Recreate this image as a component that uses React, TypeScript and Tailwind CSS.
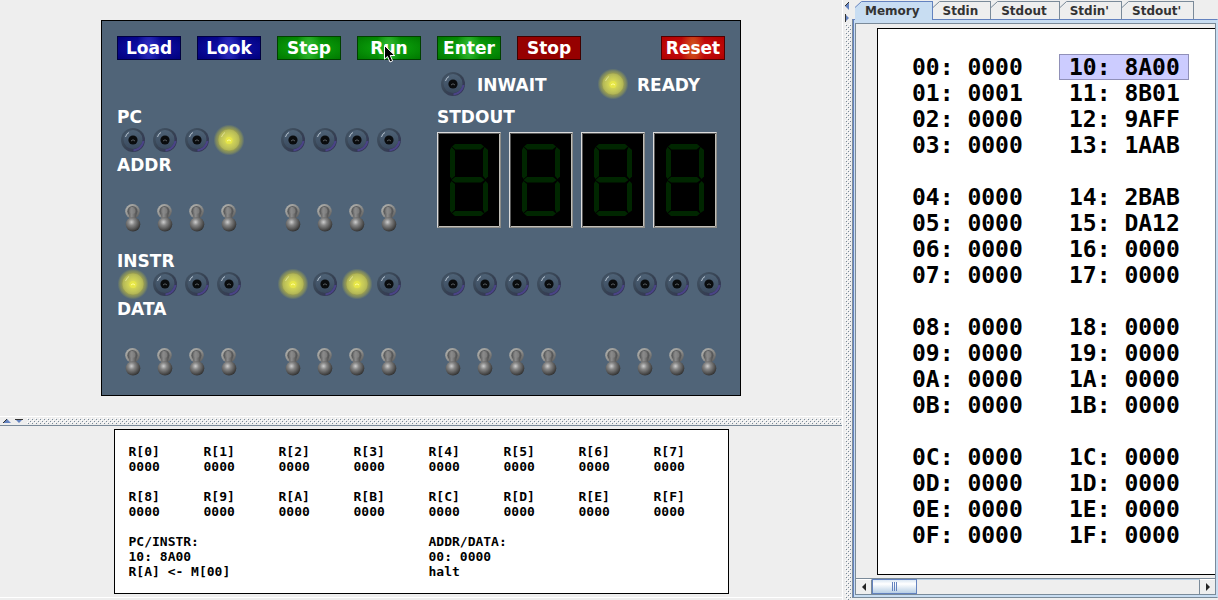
import { useState } from "react";
import clsx from "clsx";

type Word = { addr: string; value: string };

const tabs = ["Memory", "Stdin", "Stdout", "Stdin'", "Stdout'"];

const hex = (n: number, digits: number) =>
  n.toString(16).toUpperCase().padStart(digits, "0");

const stored: Record<number, string> = {
  0x01: "0001",
  0x10: "8A00",
  0x11: "8B01",
  0x12: "9AFF",
  0x13: "1AAB",
  0x14: "2BAB",
  0x15: "DA12",
};

const word = (n: number): Word => ({ addr: hex(n, 2), value: stored[n] ?? "0000" });

const memory = [0, 4, 8, 12].map((start) =>
  [0, 1, 2, 3].map((i) => [word(start + i), word(0x10 + start + i)])
);

const registers = [0, 8].map((start) =>
  Array.from({ length: 8 }, (_, i) => ({ name: `R[${hex(start + i, 1)}]`, value: "0000" }))
);

const buttonColors = {
  blue: "border-[#000040] bg-[radial-gradient(ellipse_12px_30px_at_center,#3030c0,transparent),radial-gradient(ellipse_at_center,#1010a8_20%,#00007c)]",
  green: "border-[#004000] bg-[radial-gradient(ellipse_12px_30px_at_center,#34b834,transparent),radial-gradient(ellipse_at_center,#0ca40c_20%,#007800)]",
  red: "border-[#400000] bg-[#960000]",
  glow: "border-[#500000] bg-[radial-gradient(ellipse_12px_30px_at_center,#d0581e,transparent),radial-gradient(ellipse_at_center,#cc1010_20%,#b00000)]",
};

function PanelButton({ label, color, hovered }: { label: string; color: keyof typeof buttonColors; hovered?: boolean }) {
  return (
    <button
      type="button"
      className={clsx(
        "relative flex h-6 w-16 items-center justify-center border text-[17px] leading-6 font-bold text-white",
        buttonColors[color],
        label === "Reset" && "ml-auto"
      )}
    >
      {label}
      {hovered && (
        <svg className="absolute top-2 left-[26px] h-[18px] w-3" viewBox="0 0 12 18" aria-hidden="true">
          <path d="M.5 .5V14.2L3.5 11.4L6 17L8.6 15.8L6.2 10.5H10.8Z" fill="#000" stroke="#fff" />
        </svg>
      )}
    </button>
  );
}

function Led({ on }: { on?: boolean }) {
  return (
    <span className="flex h-6 w-8 items-center justify-center">
      <svg className="h-8 w-8 shrink-0" viewBox="0 0 32 32" role="img" aria-label={on ? "on" : "off"}>
        {on ? (
          <>
            <circle cx="16" cy="16" r="15.5" fill="url(#led-halo)" />
            <circle cx="16" cy="16" r="11" fill="url(#led-on)" />
            <circle cx="16" cy="16" r="11" fill="none" stroke="#8c9048" strokeOpacity=".45" />
            <path d="M8.5 13Q10 9.5 12 8.5" fill="none" stroke="#e8e8a0" strokeOpacity=".8" />
            <circle cx="16" cy="16.5" r="3.5" fill="#e6e648" />
            <path d="M14 17Q16 14.5 18 17" fill="none" stroke="#ffff9c" />
          </>
        ) : (
          <>
            <circle cx="16" cy="16" r="12" fill="url(#led-rim)" />
            <circle cx="16" cy="15.5" r="9.5" fill="url(#led-off)" />
            <path d="M16.5 26.5Q24.5 25.5 26.5 17" fill="none" stroke="#54489c" strokeWidth="2" strokeOpacity=".7" />
            <path d="M8.5 13Q9.5 9.5 12 8.5" fill="none" stroke="#b4c0cc" />
            <circle cx="16" cy="16" r="4.6" fill="#0a0c0e" />
            <path d="M14 17Q16 14.5 18 17" fill="none" stroke="#585c60" />
          </>
        )}
      </svg>
    </span>
  );
}

function Toggle({ label }: { label: string }) {
  return (
    <label className="relative flex h-7 w-8 justify-center">
      <input type="checkbox" className="sr-only" aria-label={label} />
      <svg className="h-7 w-4" viewBox="0 0 16 28" aria-hidden="true">
        <circle cx="7.5" cy="7.3" r="7.3" fill="url(#ring)" />
        <circle cx="7.5" cy="7.3" r="5.2" fill="#5c5e60" />
        <path d="M3.5 7A4 4 0 0 1 11.5 7L11 15H4.500Z" fill="url(#stem)" />
        <circle cx="7.5" cy="7" r="3" fill="#888" fillOpacity=".6" />
        <circle cx="8" cy="20.300" r="7.300" fill="url(#ball)" />
      </svg>
    </label>
  );
}

// Lays bits out in nibbles, one 32px cell for each bit
function Bits({ bits, name, kind }: { bits: string; name: string; kind: "led" | "toggle" }) {
  const nibbles = bits.match(/.{4}/g) ?? [];
  return (
    <div className="flex gap-8" role="group" aria-label={name}>
      {nibbles.map((nibble, n) => (
        <div key={n} className="flex">
          {nibble.split("").map((bit, i) =>
            kind === "led" ? (
              <Led key={i} on={bit === "1"} />
            ) : (
              <Toggle key={i} label={`${name} bit ${bits.length - 1 - n * 4 - i}`} />
            )
          )}
        </div>
      ))}
    </div>
  );
}

function PanelLabel({ children }: { children: string }) {
  return <div className="h-6 text-[17px] leading-[26px] font-bold text-white">{children}</div>;
}

function Digit() {
  return (
    <svg
      className="h-24 w-16 border border-t-[#dcdcdc] border-r-[#8c8c88] border-b-[#8c8c88] border-l-[#dcdcdc] bg-black"
      viewBox="0 0 62 94"
      aria-hidden="true"
    >
      <path d="M.5 94V.5H62" fill="none" stroke="#585858" />
      <path d="M61.500 1V93.500H1" fill="none" stroke="#c0beb8" />
      <g fill="#002600">
        <path d="M17 11H43L46 13.500L42.500 16.500H17.500L14 13.500Z" />
        <path d="M17 44H43L46.500 47L43 49.500H17L13.500 47Z" />
        <path d="M17 78H43L46 80.500L43 83H17L14 80.500Z" />
        <path d="M13.500 14L17 17.500V43L13.500 46L12 43.500V17Z" />
        <path d="M46.500 14L50 17V43.500L47.500 46L45 43V17.500Z" />
        <path d="M13.500 48L17 51V76.500L13.500 80L12 77.500V50.500Z" />
        <path d="M47.500 48L50 50.500V77.500L46.500 80L45 76.500V51Z" />
      </g>
    </svg>
  );
}

function FrontPanel() {
  return (
    <section
      aria-label="Front panel"
      className="w-[640px] border border-black bg-[#506478] px-[15px] pt-[15px] pb-[19px] font-['DejaVu_Sans',sans-serif]"
    >
      <div className="flex gap-4">
        <PanelButton label="Load" color="blue" />
        <PanelButton label="Look" color="blue" />
        <PanelButton label="Step" color="green" />
        <PanelButton label="Run" color="green" hovered />
        <PanelButton label="Enter" color="green" />
        <PanelButton label="Stop" color="red" />
        <PanelButton label="Reset" color="glow" />
      </div>

      <div className="mt-3 ml-80 grid grid-cols-[160px_1fr]">
        <div className="flex gap-2">
          <Led />
          <PanelLabel>INWAIT</PanelLabel>
        </div>
        <div className="flex gap-2">
          <Led on />
          <PanelLabel>READY</PanelLabel>
        </div>
      </div>

      <div className="mt-2 grid grid-cols-[320px_1fr]">
        <div>
          <PanelLabel>PC</PanelLabel>
          <Bits kind="led" name="PC" bits="00010000" />
          <PanelLabel>ADDR</PanelLabel>
          <div className="mt-7">
            <Bits kind="toggle" name="ADDR" bits="00000000" />
          </div>
        </div>
        <div>
          <PanelLabel>STDOUT</PanelLabel>
          <div className="mt-1 flex gap-2">
            <Digit />
            <Digit />
            <Digit />
            <Digit />
          </div>
        </div>
      </div>

      <div className="mt-4">
        <PanelLabel>INSTR</PanelLabel>
        <Bits kind="led" name="INSTR" bits="1000101000000000" />
        <PanelLabel>DATA</PanelLabel>
        <div className="mt-7">
          <Bits kind="toggle" name="DATA" bits="0000000000000000" />
        </div>
      </div>
    </section>
  );
}

function Registers() {
  return (
    <section
      aria-label="Registers"
      className="w-[615px] border border-black bg-white py-[14px] pl-[14px] font-['DejaVu_Sans_Mono',monospace] text-[13px] leading-[15px] font-bold text-black"
    >
      <div className="grid gap-[15px]">
        {registers.map((row) => (
          <dl key={row[0].name} className="grid grid-cols-[repeat(8,75px)]">
            {row.map((reg) => (
              <div key={reg.name}>
                <dt>{reg.name}</dt>
                <dd>{reg.value}</dd>
              </div>
            ))}
          </dl>
        ))}
        <div className="grid grid-cols-[300px_1fr]">
          <div>
            <p>PC/INSTR:</p>
            <p>10: 8A00</p>
            <p>R[A] &lt;- M[00]</p>
          </div>
          <div>
            <p>ADDR/DATA:</p>
            <p>00: 0000</p>
            <p>halt</p>
          </div>
        </div>
      </div>
    </section>
  );
}

function MemoryTable() {
  return (
    <div className="w-max border border-black bg-white pt-[25px] pr-96 pb-[26px] pl-6">
      <table className="border-collapse font-['DejaVu_Sans_Mono',monospace] text-[23px] font-bold text-black">
        {memory.map((group, g) => (
          <tbody key={g}>
            {g > 0 && (
              <tr>
                <td colSpan={2} className="h-[26px] p-0" />
              </tr>
            )}
            {group.map((row) => (
              <tr key={row[0].addr}>
                {row.map((cell) => (
                  <td key={cell.addr} className="p-0 pr-[27px]">
                    <div
                      className={clsx(
                        "h-[26px] w-[130px] border pl-[9px] leading-[24px] whitespace-nowrap",
                        cell.addr === "10" ? "border-[#9090b8] bg-[#ccccff]" : "border-transparent"
                      )}
                    >
                      {cell.addr}: {cell.value}
                    </div>
                  </td>
                ))}
              </tr>
            ))}
          </tbody>
        ))}
      </table>
    </div>
  );
}

function ScrollBar() {
  return (
    <div className="flex h-4 border-t border-[#7a8a99] bg-[#eeeeee]">
      <button
        type="button"
        aria-label="Scroll left"
        className="flex w-4 items-center justify-center border-t border-r border-t-white border-r-[#7a8a99]"
      >
        <svg className="h-2 w-1" viewBox="0 0 4 8" aria-hidden="true">
          <path d="M4 0V8L0 4Z" fill="#222" />
        </svg>
      </button>
      <div className="flex-1 border-t border-t-[#b8cfe5]">
        <div className="-mt-px flex h-[15px] w-[45px] items-center justify-center gap-px border border-[#6382bf] bg-linear-to-b from-[#dce8f4] via-white via-30% to-[#b8cfe5]">
          <span className="h-[9px] w-px bg-[#6382bf]" />
          <span className="h-[9px] w-px bg-[#6382bf]" />
          <span className="h-[9px] w-px bg-[#6382bf]" />
        </div>
      </div>
      <button
        type="button"
        aria-label="Scroll right"
        className="flex w-4 items-center justify-center border-t border-l border-t-white border-l-[#7a8a99]"
      >
        <svg className="h-2 w-1" viewBox="0 0 4 8" aria-hidden="true">
          <path d="M0 0V8L4 4Z" fill="#222" />
        </svg>
      </button>
    </div>
  );
}

function TabPane() {
  const [active, setActive] = useState("Memory");

  return (
    <section className="flex w-[366px] shrink-0 flex-col pb-0.5">
      <div role="tablist" className="relative z-10 -mb-px flex h-5 pt-px pl-[3px] font-['DejaVu_Sans',sans-serif]">
        {tabs.map((tab) => {
          const selected = tab === active;
          return (
            <button
              key={tab}
              type="button"
              role="tab"
              aria-selected={selected}
              onClick={() => setActive(tab)}
              className={clsx(
                "relative border-t border-r pr-3 pl-[10px] text-xs leading-[18px] font-bold text-[#333333]",
                selected ? "border-[#6382bf] bg-[#c8ddf2]" : "border-b border-[#7a8a99] border-b-[#6382bf] bg-[#eeeeee]"
              )}
            >
              <svg className="absolute -top-px left-0 h-[7px] w-[7px]" viewBox="0 0 7 7" aria-hidden="true">
                <path d="M0 0H7L0 7Z" fill="#eeeeee" />
                <path d="M0 6.500L6.500 .5" stroke={selected ? "#6382bf" : "#7a8a99"} />
              </svg>
              {tab}
            </button>
          );
        })}
      </div>
      <div className="flex min-h-0 flex-1 border-x border-t border-b border-t-[#6382bf] border-r-[#c8ddf2] border-b-[#7a8a99] border-l-[#7a8a99]">
        <div className="flex min-w-0 flex-1 flex-col border-l border-[#6382bf] bg-[#c8ddf2] pt-[3px] pr-px pb-0.5 pl-px">
          <div className="flex min-h-0 flex-1 flex-col border border-[#7a8a99] bg-[#eeeeee]">
            <div className="flex-1 overflow-hidden pt-1 pl-[21px]">
              <MemoryTable />
            </div>
            <ScrollBar />
          </div>
        </div>
      </div>
    </section>
  );
}

function Bumps() {
  return (
    <svg className="h-full w-full" aria-hidden="true">
      <rect width="100%" height="100%" fill="url(#bumps)" />
    </svg>
  );
}

function SharedDefs() {
  return (
    <svg className="absolute h-0 w-0" aria-hidden="true">
      <defs>
        <pattern id="bumps" width="4" height="4" patternUnits="userSpaceOnUse">
          <path d="M1 1h1v1h-1zM3 3h1v1h-1z" fill="#7a8a99" />
          <path d="M0 0h1v1h-1zM2 2h1v1h-1z" fill="#fff" />
        </pattern>
        <radialGradient id="led-halo">
          <stop offset="65%" stopColor="#a8ac50" stopOpacity=".9" />
          <stop offset="85%" stopColor="#8c9458" stopOpacity=".7" />
          <stop offset="100%" stopColor="#809060" stopOpacity="0" />
        </radialGradient>
        <radialGradient id="led-on">
          <stop offset="20%" stopColor="#dcdc54" />
          <stop offset="70%" stopColor="#c0c458" />
          <stop offset="100%" stopColor="#acb058" />
        </radialGradient>
        <linearGradient id="led-rim" x1="0" y1="0" x2="1" y2="1">
          <stop offset="0%" stopColor="#46586a" />
          <stop offset="50%" stopColor="#364252" />
          <stop offset="100%" stopColor="#343258" />
        </linearGradient>
        <linearGradient id="led-off" x1="0" y1="0" x2="0" y2="1">
          <stop offset="0%" stopColor="#4e6276" />
          <stop offset="100%" stopColor="#3a4a5e" />
        </linearGradient>
        <linearGradient id="ring" x1="0" y1="0" x2="1" y2="1">
          <stop offset="0%" stopColor="#b8b8b4" />
          <stop offset="60%" stopColor="#888886" />
          <stop offset="100%" stopColor="#505050" />
        </linearGradient>
        <linearGradient id="stem">
          <stop offset="0%" stopColor="#606060" />
          <stop offset="40%" stopColor="#8c8c8c" />
          <stop offset="100%" stopColor="#505050" />
        </linearGradient>
        <radialGradient id="ball" cx="40%" cy="35%" r="65%">
          <stop offset="0%" stopColor="#cccccc" />
          <stop offset="35%" stopColor="#868686" />
          <stop offset="100%" stopColor="#343434" />
        </radialGradient>
      </defs>
    </svg>
  );
}

export default function App() {
  return (
    <main className="flex min-h-screen bg-[#eeeeee]">
      <SharedDefs />
      <div className="flex min-w-0 flex-1 flex-col">
        <div className="flex justify-center py-5">
          <FrontPanel />
        </div>
        <div className="flex h-[10px] items-center gap-1 border-t border-b border-t-white border-b-[#7a8a99] pl-[3px]">
          <svg className="h-1 w-5 shrink-0" viewBox="0 0 20 4" aria-hidden="true">
            <path d="M0 4L4 0L8 4Z" fill="#6382bf" />
            <path d="M0 4L4 0" stroke="#333" />
            <path d="M12 0H20L16 4Z" fill="#6382bf" />
            <path d="M12 .5H20" stroke="#333" />
          </svg>
          <div className="h-[6px] flex-1">
            <Bumps />
          </div>
        </div>
        <div className="flex flex-1 items-start justify-center pt-[3px]">
          <Registers />
        </div>
        <div className="mb-0.5 h-px bg-white" />
      </div>
      <div className="flex w-[10px] shrink-0 flex-col items-start gap-0.5 border-l border-white pt-0.5 pl-0.5">
        <svg className="h-5 w-1 shrink-0" viewBox="0 0 4 20" aria-hidden="true">
          <path d="M4 0V8L0 4Z" fill="#6382bf" />
          <path d="M4 0L0 4" stroke="#333" />
          <path d="M0 12V20L4 16Z" fill="#6382bf" />
          <path d="M.5 12V20" stroke="#333" />
        </svg>
        <div className="w-[6px] flex-1">
          <Bumps />
        </div>
      </div>
      <TabPane />
    </main>
  );
}
